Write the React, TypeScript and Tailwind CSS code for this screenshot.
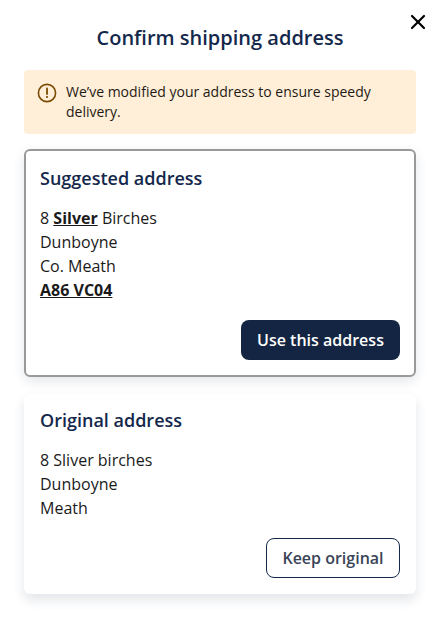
import { X } from "lucide-react";

const font = "font-['Open_Sans','Noto_Sans',sans-serif]";

const App = () => {
  return (
    <div className={`relative w-[440px] h-[618px] bg-white overflow-hidden px-6 ${font}`}>
      <button className="absolute top-[10px] right-[10px] text-black">
        <X size={24} strokeWidth={2.2} />
      </button>

      <h1 className="pt-6 h-[70px] text-center text-[20px] leading-[28px] font-semibold text-[#14284b]">
        Confirm shipping address
      </h1>

      <div className="h-16 flex gap-[9px] rounded bg-[#ffefd9] pl-[13px] pr-4 pt-3">
        <svg width="20" height="20" viewBox="0 0 20 20" className="shrink-0 mt-[1px]" fill="none">
          <circle cx="10" cy="10" r="8.6" stroke="#7a4a00" strokeWidth="1.6" />
          <path d="M10 5.5v5.5" stroke="#7a4a00" strokeWidth="1.8" strokeLinecap="round" />
          <circle cx="10" cy="14" r="1.1" fill="#7a4a00" />
        </svg>
        <p className="text-sm leading-[20px] text-[#1f1a14]">
          We’ve modified your address to ensure speedy delivery.
        </p>
      </div>

      <section className="mt-[15px] h-[228px] rounded-md border-2 border-[#999999] bg-white px-[14px] pt-[13px] shadow-[0_4px_12px_rgba(20,40,75,0.12)]">
        <h2 className="text-[18px] leading-[28px] font-semibold text-[#14284b]">Suggested address</h2>
        <div className="mt-[14px] text-[16px] leading-[24px] text-[#1a1a1a]">
          <p>
            8 <strong className="font-bold underline">Silver</strong> Birches
          </p>
          <p>Dunboyne</p>
          <p>Co. Meath</p>
          <p className="font-bold underline">A86 VC04</p>
        </div>
        <div className="mt-[18px] flex justify-end">
          <button className="h-10 w-[159px] rounded-lg bg-[#132542] text-[16px] font-semibold text-white">
            Use this address
          </button>
        </div>
      </section>

      <section className="mt-[17px] h-[200px] rounded-md bg-white px-4 pt-3 shadow-[0_6px_12px_rgba(20,40,75,0.12)]">
        <h2 className="text-[18px] leading-[28px] font-semibold text-[#14284b]">Original address</h2>
        <div className="mt-[14px] text-[16px] leading-[24px] text-[#1a1a1a]">
          <p>8 Sliver birches</p>
          <p>Dunboyne</p>
          <p>Meath</p>
        </div>
        <div className="mt-[18px] flex justify-end">
          <button className="h-10 w-[134px] rounded-lg border border-[#14284b] bg-white text-[16px] font-semibold text-[#3a4458]">
            Keep original
          </button>
        </div>
      </section>
    </div>
  );
};

export default App;
